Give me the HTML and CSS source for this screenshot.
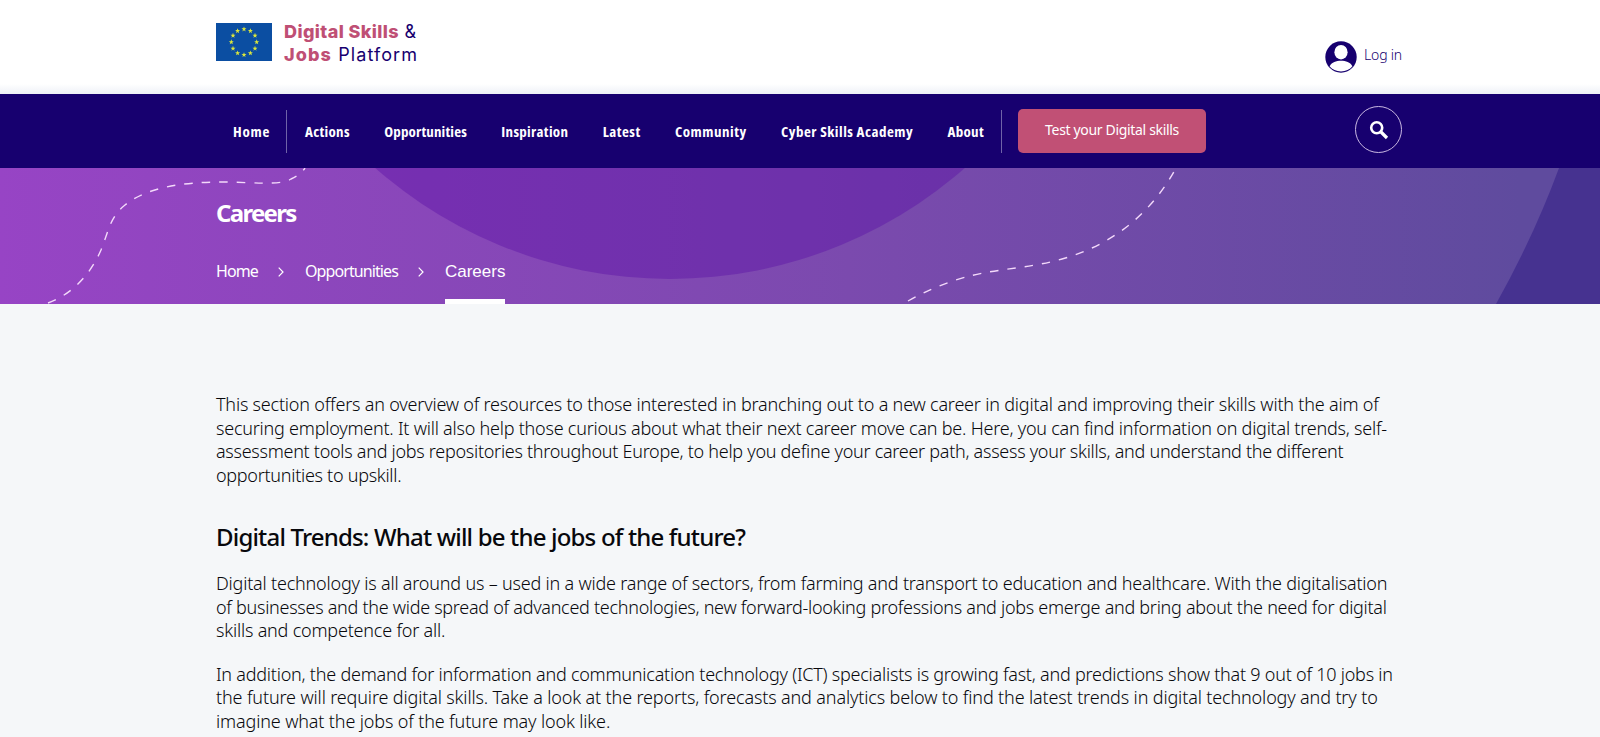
FILE: index.html
```html
<!DOCTYPE html>
<html lang="en">
<head>
    <meta charset="UTF-8">
    <meta name="viewport" content="width=device-width, initial-scale=1.0">
    <title>Careers | Digital Skills &amp; Jobs Platform</title>
    <link rel="stylesheet" href="styles.css">
</head>
<body>

    <!-- Header -->
    <header class="site-header">
        <div class="container header-inner">
            <a href="#" class="logo">
                <svg class="flag" viewBox="0 0 56 37" width="56" height="38" preserveAspectRatio="none">
                    <defs>
                        <polygon id="star" points="0,-2.6 0.7,-0.8 2.5,-0.8 1,0.4 1.6,2.2 0,1.1 -1.6,2.2 -1,0.4 -2.5,-0.8 -0.7,-0.8"/>
                    </defs>
                    <rect width="56" height="37" fill="#0b4ea2"/>
                    <g fill="#dbe63c">
                        <use href="#star" x="28" y="6"/>
                        <use href="#star" x="34.4" y="7.7"/>
                        <use href="#star" x="39" y="12.2"/>
                        <use href="#star" x="40.7" y="18.5"/>
                        <use href="#star" x="39" y="24.8"/>
                        <use href="#star" x="34.4" y="29.3"/>
                        <use href="#star" x="28" y="31"/>
                        <use href="#star" x="21.6" y="29.3"/>
                        <use href="#star" x="17" y="24.8"/>
                        <use href="#star" x="15.3" y="18.5"/>
                        <use href="#star" x="17" y="12.2"/>
                        <use href="#star" x="21.6" y="7.7"/>
                    </g>
                </svg>
                <span class="logo-text">
                    <span class="logo-line"><strong>Digital Skills</strong> &amp;</span>
                    <span class="logo-line logo-second"><strong>Jobs</strong> Platform</span>
                </span>
            </a>
            <a href="#" class="login">
                <svg viewBox="0 0 32 32" width="32" height="32">
                    <circle cx="16" cy="16" r="15.7" fill="#17006f"/>
                    <ellipse cx="16" cy="11.2" rx="6.6" ry="7.2" fill="#fff"/>
                    <path d="M4.6 25.2C7 21 11 19.7 16 19.7s9 1.3 11.4 5.5C24.8 28.5 20.8 30.4 16 30.4S7.2 28.5 4.6 25.2Z" fill="#fff"/>
                </svg>
                <span>Log in</span>
            </a>
        </div>
    </header>

    <!-- Navigation -->
    <nav class="main-nav">
        <div class="container nav-inner">
            <a href="#" class="nav-link nav-home">Home</a>
            <div class="nav-group">
                <a href="#" class="nav-link">Actions</a>
                <a href="#" class="nav-link nav-narrow">Opportunities</a>
                <a href="#" class="nav-link">Inspiration</a>
                <a href="#" class="nav-link nav-wide">Latest</a>
                <a href="#" class="nav-link nav-wide">Community</a>
                <a href="#" class="nav-link nav-wide">Cyber Skills Academy</a>
                <a href="#" class="nav-link">About</a>
            </div>
            <a href="#" class="btn-test">Test your Digital skills</a>
            <button type="button" class="btn-search" aria-label="Search">
                <svg viewBox="0 0 20 20" width="20" height="20" fill="none" stroke="#fff">
                    <circle cx="7.7" cy="7.7" r="5.5" stroke-width="2.6"/>
                    <path d="M12 12l6 6" stroke-width="3.2"/>
                </svg>
            </button>
        </div>
    </nav>

    <!-- Page banner -->
    <section class="banner">
        <svg class="banner-art" viewBox="0 0 1600 136" width="1600" height="136">
            <circle cx="670" cy="-336" r="447" fill="#5b0fa5" fill-opacity="0.41"/>
            <path d="M1559 0Q1534 68 1496 136H1600V0Z" fill="#24107f" fill-opacity="0.42"/>
            <g fill="none" stroke="#f3d9fa" stroke-width="1.4" stroke-dasharray="8.5 9">
                <path d="M48 135C75 125 92 103 101 82C109 62 110 49 125 37C146 20 180 14 223 14C250 14 281 18 291 11Q300 7 305 0"/>
                <path d="M908 133C975 96 1009 106 1062 91C1112 77 1151 46 1176 0"/>
            </g>
        </svg>
        <div class="container banner-inner">
            <h1>Careers</h1>
            <ol class="breadcrumb">
                <li><a href="#">Home</a></li>
                <li class="sep"><svg viewBox="0 0 6 10" width="6" height="10"><path d="M0.7 0.7l4.300 4.300-4.300 4.300" fill="none" stroke="#fff" stroke-width="1.2"/></svg></li>
                <li><a href="#">Opportunities</a></li>
                <li class="sep"><svg viewBox="0 0 6 10" width="6" height="10"><path d="M0.7 0.7l4.300 4.300-4.300 4.300" fill="none" stroke="#fff" stroke-width="1.2"/></svg></li>
                <li class="current">Careers</li>
            </ol>
        </div>
    </section>

    <!-- Content -->
    <main class="container content">
        <p>This section offers an overview of resources to those interested in branching out to a new career in digital and improving their skills with the aim of<br>
        <span class="snug">securing employment. It will also help those curious about what their next career move can be. Here, you can find information on digital trends, self-</span><br>
        <span class="tight">assessment tools and jobs repositories throughout Europe, to help you define your career path, assess your skills, and understand the different</span><br>
        <span class="tight">opportunities to upskill.</span></p>

        <h2>Digital Trends: What will be the jobs of the future?</h2>

        <p>Digital technology is all around us – used in a wide range of sectors, from farming and transport to education and healthcare. With the digitalisation<br>
        <span class="tight">of businesses and the wide spread of advanced technologies, new forward-looking professions and jobs emerge and bring about the need for digital</span><br>
        skills and competence for all.</p>

        <p><span class="snug">In addition, the demand for information and communication technology (ICT) specialists is growing fast, and predictions show that 9 out of 10 jobs in</span><br>
        <span class="loose">the future will require digital skills. Take a look at the reports, forecasts and analytics below to find the latest trends in digital technology and try to</span><br>
        <span class="loose">imagine what the jobs of the future may look like.</span></p>
    </main>

</body>
</html>
```
FILE: styles.css
```css
/* Global Styles */
* {
    margin: 0;
    padding: 0;
    box-sizing: border-box;
}

body {
    background: #f5f7f9;
    color: #08080c;
    font-family: "Noto Sans", sans-serif;
    height: 737px;
    overflow: hidden;
}

a {
    color: inherit;
    text-decoration: none;
}

.container {
    width: 1186px;
    margin-left: 216px;
}

/* HEADER */
.site-header {
    height: 94px;
    background: linear-gradient(#fff 84px, #eef1f7);
}

.header-inner {
    display: flex;
    justify-content: space-between;
    color: #17006f;
}

.logo {
    display: flex;
    gap: 12px;
    padding-top: 23px;
}

.logo-text {
    display: flex;
    flex-direction: column;
    margin-top: -3px;
    font-family: Inter, sans-serif;
    font-size: 18px;
    line-height: 23px;
    letter-spacing: 0.4px;
    white-space: nowrap;
}

.logo-text strong {
    color: #bf4f75;
    font-weight: 800;
}

.logo-second {
    letter-spacing: 1.1px;
}

.login {
    display: flex;
    gap: 7px;
    padding-top: 41px;
    font-size: 14px;
    font-weight: 300;
    line-height: 28px;
    letter-spacing: -0.2px;
}

/* NAVIGATION */
.main-nav {
    height: 74px;
    background: #17006f;
    color: #fff;
}

.nav-inner {
    display: flex;
    align-items: center;
    height: 74px;
}

.nav-link {
    font-family: "Open Sans", sans-serif;
    font-stretch: 75%;
    font-size: 15px;
    font-weight: 700;
    letter-spacing: 0.3px;
    white-space: nowrap;
}

.nav-narrow {
    letter-spacing: 0.15px;
}

.nav-wide {
    letter-spacing: 0.5px;
}

.nav-home {
    width: 71px;
    padding-left: 17px;
    line-height: 43px;
    letter-spacing: 0.8px;
    border-right: 1px solid #6f63a8;
}

.nav-group {
    display: flex;
    justify-content: space-between;
    width: 715px;
    padding: 0 17px 0 18px;
    line-height: 43px;
    border-right: 1px solid #6f63a8;
}

.btn-test {
    width: 188px;
    height: 44px;
    margin-left: 16px;
    border-radius: 5px;
    background: #c15075;
    font-size: 14px;
    line-height: 42px;
    letter-spacing: -0.33px;
    text-align: center;
}

.btn-search {
    display: flex;
    align-items: center;
    justify-content: center;
    width: 47px;
    height: 47px;
    margin: 0 0 3px auto;
    border: 1px solid #c9b8e2;
    border-radius: 50%;
    background: none;
}

/* BANNER */
.banner {
    position: relative;
    height: 136px;
    background: linear-gradient(90deg, #9744c5, #7b4aae 53%, #5f4b9e 95%);
    color: #fff;
}

.banner-art {
    position: absolute;
    top: 0;
    left: 0;
}

.banner-inner {
    position: relative;
    padding-top: 27px;
}

.banner h1 {
    font-size: 24px;
    font-weight: 700;
    line-height: 36px;
    letter-spacing: -1.7px;
}

.breadcrumb {
    display: flex;
    height: 54px;
    margin-top: 19px;
    list-style: none;
    font-size: 16px;
    line-height: 42px;
    letter-spacing: -0.9px;
}

.sep {
    width: 47px;
    text-align: center;
}

.current {
    border-bottom: 5px solid #fff;
    font-family: "Liberation Sans", sans-serif;
    font-size: 17px;
    line-height: 43px;
    letter-spacing: 0;
}

/* CONTENT */
.content {
    padding-top: 89px;
}

.content p {
    margin-bottom: 20px;
    font-size: 18px;
    font-weight: 300;
    line-height: 23.5px;
    letter-spacing: -0.2px;
    white-space: nowrap;
}

.content .loose {
    letter-spacing: -0.14px;
}

.content .snug {
    letter-spacing: -0.23px;
}

.content .tight {
    letter-spacing: -0.28px;
}

.content h2 {
    margin: 0 0 17px;
    padding-top: 12px;
    font-size: 24px;
    font-weight: 500;
    line-height: 36px;
    letter-spacing: -0.82px;
}
```
